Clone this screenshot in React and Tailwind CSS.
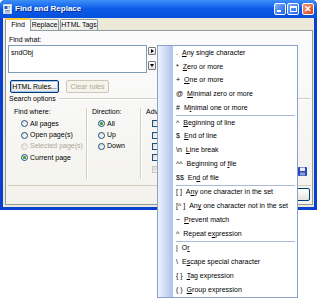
import React from 'react';

const menuGroups = [
  [
    ['.', 'Any single character', 0],
    ['*', 'Zero or more', 0],
    ['+', 'One or more', 0],
    ['@', 'Minimal zero or more', 0],
    ['#', 'Minimal one or more', 1],
  ],
  [
    ['^', 'Beginning of line', 0],
    ['$', 'End of line', 0],
    ['\\n', 'Line break', 0],
    ['^^', 'Beginning of file', 13],
    ['$$', 'End of file', 2],
  ],
  [
    ['[ ]', 'Any one character in the set', 1],
    ['[^ ]', 'Any one character not in the set', 2],
    ['~', 'Prevent match', 0],
    ['^', 'Repeat expression', 8],
  ],
  [
    ['|', 'Or', 1],
    ['\\', 'Escape special character', 1],
    ['{ }', 'Tag expression', 0],
    ['( )', 'Group expression', 0],
  ],
];

const Mnemonic = ({ text, at }) => (
  <span>
    {text.slice(0, at)}
    <span className="underline underline-offset-[1px]">{text[at]}</span>
    {text.slice(at + 1)}
  </span>
);

function Radio({ checked, disabled }) {
  return (
    <span
      className={`w-[7px] h-[7px] shrink-0 rounded-full border flex items-center justify-center bg-gradient-to-br from-[#dcdad2] to-white ${
        disabled ? 'border-[#cac8bb]' : 'border-[#1c5180]'
      }`}
    >
      {checked && <span className="w-[3px] h-[3px] rounded-full bg-[#21a121]" />}
    </span>
  );
}

function Check({ checked, disabled }) {
  return (
    <span
      className={`w-[7px] h-[7px] shrink-0 border flex items-center justify-center bg-gradient-to-br from-[#dcdad2] to-white text-[6px] leading-none ${
        disabled ? 'border-[#cac8bb] text-[#cac8bb]' : 'border-[#1c5180] text-[#21a121]'
      }`}
    >
      {checked && '✓'}
    </span>
  );
}

function TitleButton({ kind }) {
  const red = kind === 'close';
  return (
    <div
      className={`w-[12px] h-[12px] rounded-[2px] border border-white flex items-center justify-center ${
        red ? 'bg-gradient-to-br from-[#f09878] to-[#d5401c]' : 'bg-gradient-to-br from-[#7fb2ff] to-[#1c5ee8]'
      }`}
    >
      {kind === 'min' && <div className="w-[4px] h-[2px] bg-white self-end mb-[2px] mr-[3px]" />}
      {kind === 'max' && <div className="w-[7px] h-[6px] border border-white border-t-2" />}
      {kind === 'close' && <span className="text-white font-bold text-[9px] leading-none">✕</span>}
    </div>
  );
}

function XpButton({ children, width, disabled, focused }) {
  return (
    <div
      className={`h-[13px] rounded-[2px] border flex items-center justify-center whitespace-nowrap ${width} ${
        disabled
          ? 'border-[#c9c7ba] bg-[#f5f4ea] text-[#aca899]'
          : 'border-[#003c74] bg-gradient-to-b from-white to-[#e6e4dc] text-black'
      } ${focused ? 'shadow-[inset_0_0_0_1px_#a9c4f5]' : ''}`}
    >
      {children}
    </div>
  );
}

export default function App() {
  return (
    <div className="w-[319px] h-[299px] bg-white relative overflow-hidden font-['Liberation_Sans',Arial,sans-serif] text-[7px] leading-[8px] text-black">
      {/* window */}
      <div className="w-[317px] h-[210px] flex flex-col rounded-t-[5px] bg-[#0841d0]">
        <div className="h-[18px] flex items-center rounded-t-[5px] bg-gradient-to-b from-[#3d8ff8] via-[#0a5ae8] to-[#0650dc] pl-[3px] pr-[3px]">
          <svg width="9" height="10" viewBox="0 0 9 10" className="shrink-0">
            <rect x="0.5" y="0.5" width="8" height="9" fill="#f4f7fb" stroke="#c8d4e6" />
            <rect x="1.5" y="2" width="3" height="3" fill="#2c5db5" />
            <path d="M2 6.5h5M2 8h5M5.5 2.5h1.5M5.5 4h1.5" stroke="#5079c0" strokeWidth="0.8" />
          </svg>
          <span className="ml-[3px] text-white font-bold text-[8px] leading-none whitespace-nowrap [text-shadow:1px_1px_0_#0a2a8a]">Find and Replace</span>
          <div className="ml-auto flex items-center gap-[1px]">
            <TitleButton kind="min" />
            <TitleButton kind="max" />
            <div className="w-[1px]" />
            <TitleButton kind="close" />
          </div>
        </div>

        <div className="flex-1 mx-[3px] mb-[3px] bg-[#ece9d8] flex flex-col pl-[2px] pr-[1px] pb-[2px]">
          {/* tabs */}
          <div className="h-[12px] flex items-end whitespace-nowrap">
            <div className="relative z-10 w-[26px] h-[13px] -mb-[1px] bg-[#fcfcfe] border border-[#919b9c] border-b-0 border-t-2 border-t-[#ffc83c] rounded-t-[2px] flex items-center justify-center pb-[1px]">
              Find
            </div>
            <div className="w-[28px] h-[11px] bg-gradient-to-b from-white to-[#ecebe5] border border-[#919b9c] border-b-0 border-l-0 rounded-t-[2px] flex items-center justify-center">
              Replace
            </div>
            <div className="w-[38px] h-[11px] ml-[1px] bg-gradient-to-b from-white to-[#ecebe5] border border-[#919b9c] border-b-0 rounded-t-[2px] flex items-center justify-center">
              HTML Tags
            </div>
          </div>

          {/* tab panel */}
          <div className="flex-1 border border-[#919b9c] bg-gradient-to-b from-[#fcfcfe] to-[#f3f2ec] flex flex-col whitespace-nowrap">
            <div className="mt-[5px] ml-[3px] h-[8px]">Find what:</div>
            <div className="mt-[1px] ml-[2px] flex">
              <div className="w-[139px] h-[28px] bg-white border border-[#7f9db9] px-[2px] pt-[3px]">sndObj</div>
              <div className="ml-[1px] flex flex-col">
                <div className="mt-[2px] w-[8px] h-[8px] border border-[#7a7a7a] rounded-[1px] bg-gradient-to-b from-white to-[#e2e0d8] flex items-center justify-center">
                  <span className="w-0 h-0 border-y-[2.5px] border-y-transparent border-l-[3px] border-l-black" />
                </div>
                <div className="mt-[6px] w-[8px] h-[9px] border border-[#7a7a7a] rounded-[1px] bg-gradient-to-b from-white to-[#e2e0d8] flex items-center justify-center">
                  <span className="w-0 h-0 border-x-[2.5px] border-x-transparent border-t-[3px] border-t-black" />
                </div>
              </div>
            </div>

            <div className="mt-[7px] ml-[4px] flex gap-[7px]">
              <XpButton width="w-[49px]" focused>HTML Rules...</XpButton>
              <XpButton width="w-[43px]" disabled>Clear rules</XpButton>
            </div>

            {/* search options group */}
            <div className="mt-[2px] ml-[3px] mr-[1px] flex items-center h-[8px]">
              <span>Search options</span>
              <div className="flex-1 ml-[3px] h-[2px] border-t border-[#d0d0bf] border-b border-b-white" />
            </div>
            <div className="ml-[2px] mr-[1px] h-[83px] flex border-b border-[#d0d0bf]">
              <div className="w-[78px] pl-[6px] pt-[5px] flex flex-col">
                <div className="h-[8px]">Find where:</div>
                <div className="mt-[2px] pl-[7px] flex flex-col">
                  {[
                    ['All pages', false, false],
                    ['Open page(s)', false, false],
                    ['Selected page(s)', false, true],
                    ['Current page', true, false],
                  ].map(([label, checked, disabled]) => (
                    <div key={label} className={`h-[11.4px] flex items-center gap-[2px] ${disabled ? 'text-[#aca899]' : ''}`}>
                      <Radio checked={checked} disabled={disabled} />
                      <span>{label}</span>
                    </div>
                  ))}
                </div>
              </div>
              <div className="w-[2px] mt-[5px] mb-[6px] border-l border-[#d0d0bf] border-r border-r-white" />
              <div className="w-[52px] pl-[4px] pt-[5px] flex flex-col">
                <div className="h-[8px]">Direction:</div>
                <div className="mt-[2px] pl-[6px] flex flex-col">
                  {[
                    ['All', true],
                    ['Up', false],
                    ['Down', false],
                  ].map(([label, checked]) => (
                    <div key={label} className="h-[11.4px] flex items-center gap-[2px]">
                      <Radio checked={checked} />
                      <span>{label}</span>
                    </div>
                  ))}
                </div>
              </div>
              <div className="w-[2px] mt-[5px] mb-[6px] border-l border-[#d0d0bf] border-r border-r-white" />
              <div className="flex-1 pl-[4px] pt-[5px] flex">
                <div className="flex flex-col">
                  <div className="h-[8px]">Adv</div>
                  <div className="mt-[2px] pl-[6px] flex flex-col">
                    {[
                      [false, false],
                      [false, false],
                      [false, false],
                      [false, false],
                      [true, true],
                    ].map(([checked, disabled], i) => (
                      <div key={i} className="h-[11.4px] flex items-center">
                        <Check checked={checked} disabled={disabled} />
                      </div>
                    ))}
                  </div>
                </div>
                <svg width="9" height="9" viewBox="0 0 9 9" className="ml-auto mr-[4px] mb-[9px] self-end">
                  <rect x="0" y="0" width="9" height="9" rx="1" fill="#2b47b8" />
                  <rect x="2" y="0.5" width="5" height="3.5" fill="#e8ecf6" />
                  <rect x="2" y="5.5" width="5" height="3" fill="#8ea0dd" />
                </svg>
              </div>
            </div>
            <div className="mt-[2px] mr-[2px] flex justify-end">
              <XpButton width="w-[60px]" />
            </div>
          </div>
        </div>
      </div>

      {/* regex popup menu */}
      <div className="absolute left-[157px] top-[45px] w-[141px] border border-[#8aa0cc] bg-[linear-gradient(to_right,#eef3fc_0px,#adc3ea_15px,#ffffff_15px)] flex flex-col">
        {menuGroups.map((group, gi) => (
          <React.Fragment key={gi}>
            {gi > 0 && <div className="ml-[18px] mr-[2px] h-[1px] bg-[#a9b9d8]" />}
            {group.map(([prefix, label, at]) => (
              <div key={label} className="h-[13.75px] flex items-center pl-[18px] whitespace-nowrap">
                <span>{prefix}</span>
                <span className="ml-[4px]">
                  <Mnemonic text={label} at={at} />
                </span>
              </div>
            ))}
          </React.Fragment>
        ))}
      </div>
    </div>
  );
}
